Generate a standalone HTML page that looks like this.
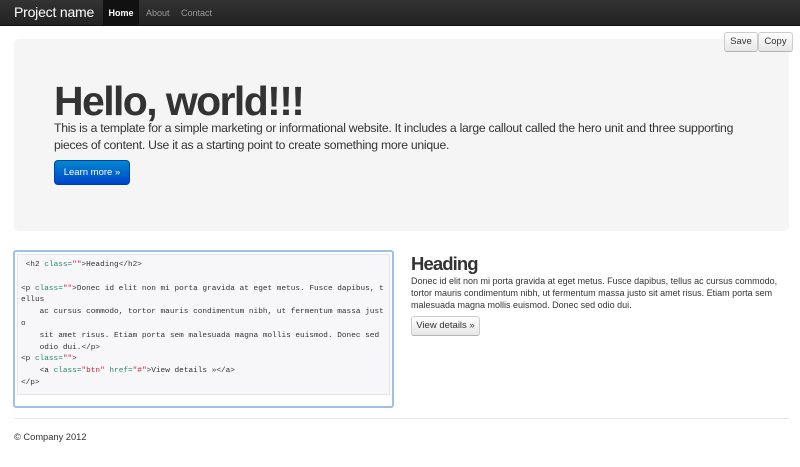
<!DOCTYPE html>
<html><head><meta charset="utf-8"><style>
*{box-sizing:border-box;margin:0;padding:0}
body{width:800px;height:467px;background:#fff;font-family:"Liberation Sans",sans-serif;color:#333;position:relative;overflow:hidden}
.nav{position:absolute;left:0;top:0;width:800px;height:26px;background:linear-gradient(#333,#222);border-bottom:1px solid #111}
.brand{position:absolute;left:14px;top:4px;font-size:14px;color:#fff;letter-spacing:-0.2px}
.nav a{position:absolute;top:0;height:26px;line-height:26px;font-size:9px;color:#999;text-decoration:none}
.home{left:103px;width:36px;background:#111;color:#fff!important;font-weight:bold;text-align:center}
.hero{position:absolute;left:14px;top:39px;width:775px;height:192px;background:#f5f5f5;border-radius:5px}
h1{position:absolute;left:40px;top:39px;font-size:41px;font-weight:bold;color:#333;letter-spacing:-1.6px}
.hp{position:absolute;left:40px;top:81px;width:690px;font-size:12.2px;line-height:17px;letter-spacing:-0.25px}
.lm{position:absolute;left:40px;top:121px;width:76px;height:25px;background:linear-gradient(#0088cc,#0044cc);border:1px solid #0040b0;border-radius:4px;color:#fff;font-size:9.5px;line-height:23px;text-align:center}
.btn{position:absolute;background:linear-gradient(#fff,#e6e6e6);border:1px solid #ccc;border-bottom-color:#b3b3b3;border-radius:3px;font-size:9.5px;color:#333;text-align:center}
.code{position:absolute;left:13px;top:250px;width:381px;height:158px;border:2px solid #9ec1e8;border-radius:3px;background:#fff}
pre{position:absolute;left:2px;top:2px;width:373px;height:141px;background:#f7f7f9;border:1px solid #e6e6ea;font-family:"Liberation Mono",monospace;font-size:7.75px;line-height:11.8px;color:#333;padding:5px 3px;white-space:pre}
.at{color:#2a8a6a}.s{color:#c23}
h2{position:absolute;left:411px;top:253px;font-size:18.5px;font-weight:bold;color:#333;letter-spacing:-0.9px}
.p2{position:absolute;left:411px;top:275px;width:375px;font-size:9px;line-height:12px}
hr{position:absolute;left:14px;top:418px;width:775px;border:0;border-top:1px solid #e5e5e5}
.foot{position:absolute;left:14px;top:432px;font-size:9.3px}
</style></head><body>
<div class="nav"><div class="brand">Project name</div><a class="home">Home</a><a style="left:146px">About</a><a style="left:181px">Contact</a></div>
<div class="hero"><h1>Hello, world!!!</h1><div class="hp">This is a template for a simple marketing or informational website. It includes a large callout called the hero unit and three supporting pieces of content. Use it as a starting point to create something more unique.</div><div class="lm">Learn more »</div></div>
<div class="btn" style="left:724px;top:32px;width:34px;height:20px;line-height:18px">Save</div>
<div class="btn" style="left:758px;top:32px;width:35px;height:20px;line-height:18px">Copy</div>
<div class="code"><pre> &lt;h2 <span class="at">class=</span><span class="s">""</span>&gt;Heading&lt;/h2&gt;

&lt;p <span class="at">class=</span><span class="s">""</span>&gt;Donec id elit non mi porta gravida at eget metus. Fusce dapibus, t
ellus
    ac cursus commodo, tortor mauris condimentum nibh, ut fermentum massa just
o
    sit amet risus. Etiam porta sem malesuada magna mollis euismod. Donec sed
    odio dui.&lt;/p&gt;
&lt;p <span class="at">class=</span><span class="s">""</span>&gt;
    &lt;a <span class="at">class=</span><span class="s">"btn"</span> <span class="at">href=</span><span class="s">"#"</span>&gt;View details »&lt;/a&gt;
&lt;/p&gt;</pre></div>
<h2>Heading</h2>
<div class="p2">Donec id elit non mi porta gravida at eget metus. Fusce dapibus, tellus ac cursus commodo, tortor mauris condimentum nibh, ut fermentum massa justo sit amet risus. Etiam porta sem malesuada magna mollis euismod. Donec sed odio dui.</div>
<div class="btn" style="left:411px;top:316px;width:69px;height:20px;line-height:18px">View details »</div>
<hr>
<div class="foot">© Company 2012</div>
</body></html>
